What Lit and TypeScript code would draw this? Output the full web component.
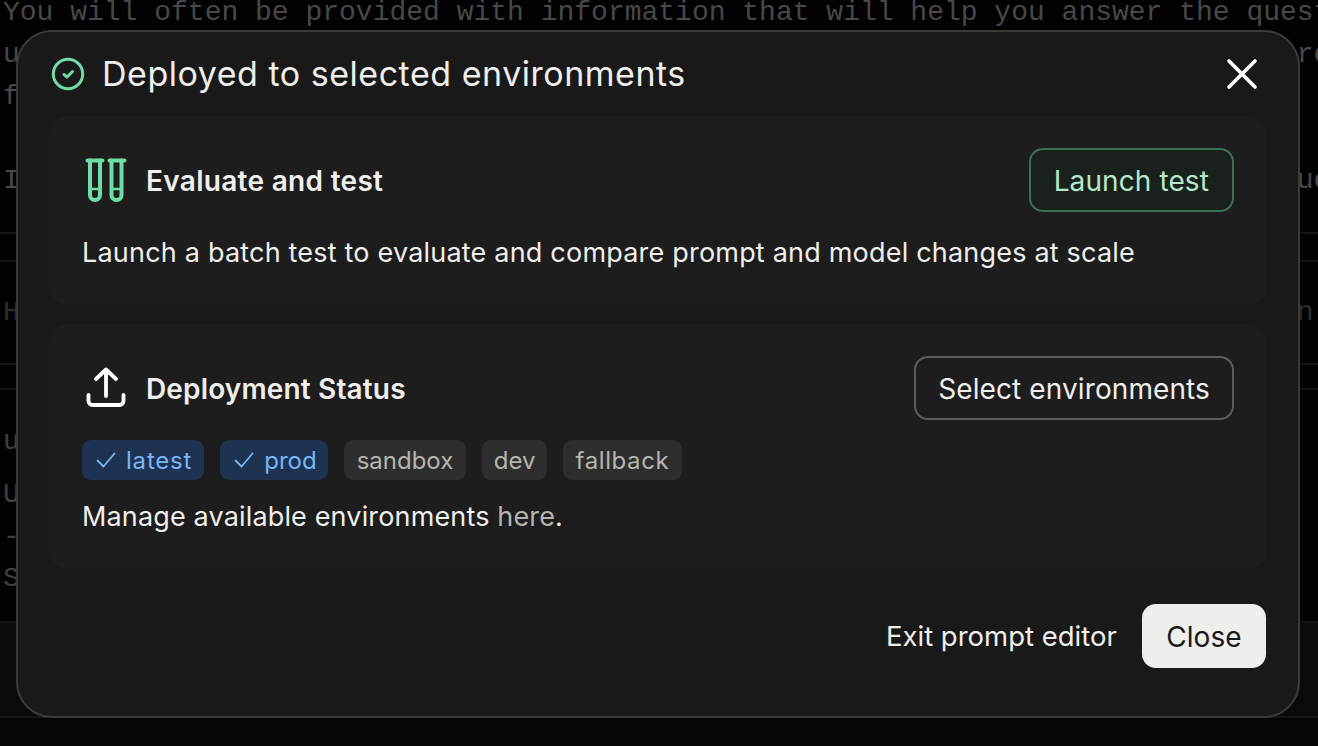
import { LitElement, html, css } from "lit";
import { customElement } from "lit/decorators.js";

const pad = (start: string, end: string, col = 77) => start.padEnd(col, " ") + end;

@customElement("app-root")
export class AppRoot extends LitElement {
  static styles = css`
    :host { display: block; position: relative; width: 100%; height: 746px; overflow: hidden; background: #020202; font-family: Inter, "Liberation Sans", sans-serif; }
    .page { font-family: "Liberation Mono", monospace; font-size: 28px; line-height: 42px; color: #484848; padding-left: 3px; margin-top: -8px; }
    .page > div { white-space: pre; }
    .page > .rule { border-top: 2px solid #151515; margin-left: -3px; padding-left: 3px; }
    .page > .s1 { height: 26px; margin-top: 30px; }
    .page > .s2 { height: 103px; padding-top: 30px; box-sizing: border-box; color: #2c2c2c; }
    .page > .s3 { height: 23px; }
    .page > .s4 { padding-top: 31px; color: #404040; }
    .page > .gap10 { margin-top: 11px; color: #404040; }
    .page > .dim { color: #404040; }
    .page > .s5 { margin-top: 21px; height: 93px; background: #0a0a0a; }
    .page > .s6 { background: #050505; height: 40px; }
    .modal { position: absolute; left: 16px; top: 30px; width: 1284px; height: 688px; box-sizing: border-box; border: 2px solid #3b3b39; border-radius: 36px; background: #191919; padding: 0 32px; display: flex; flex-direction: column; }
    .head { height: 84px; display: flex; align-items: center; gap: 16px; flex: none; }
    .head h1 { flex: 1; margin: 0; font-weight: 400; font-size: 34px; letter-spacing: 0.52px; color: #eeeeec; line-height: 44px; }
    .x { width: 48px; height: 48px; display: flex; align-items: center; justify-content: center; }
    .card { background: #1d1d1d; border-radius: 16px; padding: 32px; display: flex; flex-direction: column; }
    .card + .card { margin-top: 20px; }
    .row { display: flex; align-items: center; height: 64px; }
    .row svg { flex: none; }
    .row h2 { flex: 1; margin: 2px 0 0 16px; font-size: 28px; font-weight: 600; letter-spacing: 0.15px; color: #eeeeec; }
    .row h2.eval { letter-spacing: 0.3px; }
    .btn { box-sizing: border-box; height: 64px; display: flex; align-items: center; padding: 2px 22px 0; border-radius: 14px; border: 2px solid #5c5c5a; font-size: 28px; letter-spacing: 0.1px; color: #eeeeec; }
    .btn.green { border-color: #3f6f55; background: #1a211d; color: #b5e8c9; padding: 2px 23px 0; }
    .txt { font-size: 27px; letter-spacing: 0.2px; line-height: 42px; color: #eeeeec; margin: 20px 0 -2px; }
    .chips { display: flex; gap: 16px; margin-top: 20px; }
    .chip { height: 40px; box-sizing: border-box; display: flex; align-items: center; gap: 10px; padding: 0 13px; border-radius: 9px; background: #2e2e2e; color: #b5b5ae; font-size: 24px; }
    .chip.on { background: #1e3251; color: #78b5f5; padding: 0 11px 0 14px; }
    .chip.latest { letter-spacing: 0.8px; padding-right: 12px; }
    .chip.dev { padding: 0 11.5px; }
    .chip.fall { letter-spacing: 0.6px; padding: 0 12.5px; }
    .txt.m { margin-top: 16px; letter-spacing: 0.15px; }
    .txt a { color: #b5b5ae; }
    .foot { display: flex; justify-content: flex-end; align-items: center; gap: 25px; margin-top: 36px; }
    .exit { font-size: 27.5px; color: #eeeeec; }
    .close { box-sizing: border-box; height: 64px; display: flex; align-items: center; padding: 2px 24.5px 0; border-radius: 14px; background: #eeeeec; color: #191919; font-size: 28px; }
  `;

  private check() {
    return html`<svg width="20" height="20" viewBox="0 0 20 20" fill="none" stroke="#78b5f5" stroke-width="1.8" stroke-linecap="round" stroke-linejoin="round"><path d="M1.5 10.5l6 6L18.5 3.5"/></svg>`;
  }

  render() {
    return html`
      <div class="page">
        <div>You will often be provided with information that will help you answer the question</div>
        <div>${pad("use this information", "re")}</div>
        <div>for the final answer</div>
        <div> </div>
        <div>${pad("If the answer is not in the context", "uc")}</div>
        <div class="rule s1"></div>
        <div class="rule s2">${pad("Here", "n")}</div>
        <div class="rule s3"></div>
        <div class="rule s4">user</div>
        <div class="gap10">User</div>
        <div class="dim">---</div>
        <div class="dim">System</div>
        <div class="rule s5"></div>
        <div class="rule s6"></div>
      </div>
      <div class="modal">
        <div class="head">
          <svg width="36" height="36" viewBox="0 0 36 36" fill="none" stroke="#6fdca6" stroke-linecap="round" stroke-linejoin="round"><circle cx="18" cy="18" r="14.7" stroke-width="3"/><path d="M14 18.5l3 2.5 5.5-5.5" stroke-width="3"/></svg>
          <h1>Deployed to selected environments</h1>
          <div class="x"><svg width="32" height="32" viewBox="0 0 32 32" fill="none" stroke="#fff" stroke-width="3.6" stroke-linecap="round"><path d="M3 3l26 26M29 3L3 29"/></svg></div>
        </div>
        <div class="card">
          <div class="row">
            <svg width="48" height="48" viewBox="0 0 48 48" fill="none" stroke="#6fdca6" stroke-width="4" stroke-linecap="round" stroke-linejoin="round"><path d="M5.5 4.5h15M27.5 4.5h15"/><path d="M8 4.5V39a5 5 0 0 0 10 0V4.5M29.5 4.5V39a5 5 0 0 0 10 0V4.5"/><path d="M8 33h10M29.5 33h10" stroke-width="2.5"/></svg>
            <h2 class="eval">Evaluate and test</h2>
            <div class="btn green">Launch test</div>
          </div>
          <div class="txt">Launch a batch test to evaluate and compare prompt and model changes at scale</div>
        </div>
        <div class="card">
          <div class="row">
            <svg width="48" height="48" viewBox="0 0 48 48" fill="none" stroke="#fff" stroke-width="3.8" stroke-linecap="round" stroke-linejoin="round"><path d="M24 32V6M14 15l10-9.5L34 15"/><path d="M6.5 31v6a4 4 0 0 0 4 4h27a4 4 0 0 0 4-4v-6"/></svg>
            <h2>Deployment Status</h2>
            <div class="btn">Select environments</div>
          </div>
          <div class="chips">
            <div class="chip on latest">${this.check()}latest</div>
            <div class="chip on">${this.check()}prod</div>
            <div class="chip">sandbox</div>
            <div class="chip dev">dev</div>
            <div class="chip fall">fallback</div>
          </div>
          <div class="txt m">Manage available environments <a>here</a>.</div>
        </div>
        <div class="foot">
          <div class="exit">Exit prompt editor</div>
          <div class="close">Close</div>
        </div>
      </div>
    `;
  }
}
